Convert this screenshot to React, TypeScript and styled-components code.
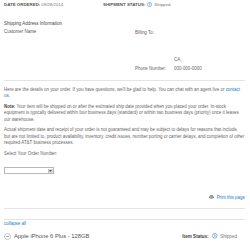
import React from "react";
import styled, { createGlobalStyle } from "styled-components";

const GlobalStyle = createGlobalStyle`
  html, body { margin: 0; padding: 0; background: #ffffff; }
  body { font-family: "Liberation Sans", Arial, sans-serif; color: #666666; }
  * { box-sizing: border-box; }
`;

const Page = styled.div`
  width: 250px;
  padding: 0.5px 5px 0 4px;
  font-size: 4.45px;
`;

const HeaderRow = styled.div`
  display: grid;
  grid-template-columns: 99px auto;
  line-height: 7px;
  font-size: 4.4px;
`;

const HeaderItem = styled.div`
  display: flex;
  align-items: center;
  gap: 1px;
  white-space: nowrap;
`;

const Label = styled.span`
  font-weight: bold;
  text-transform: uppercase;
  color: #555555;
`;

const Value = styled.span`
  color: #777777;
`;

const StatusIcon = styled.svg<{ $size: number }>`
  width: ${(p) => p.$size}px;
  height: ${(p) => p.$size}px;
  flex: none;
  margin: 0 1px;
`;

const AddressGrid = styled.div`
  display: grid;
  grid-template-columns: 131px 1fr;
  margin-top: 12.5px;
`;

const LeftCol = styled.div`
  line-height: 8px;
`;

const AddrTitle = styled.div`
  color: #444444;
`;

const AddrText = styled.div`
  color: #555555;
`;

const BillingGrid = styled.div`
  display: grid;
  grid-template-columns: 39px auto;
  grid-auto-rows: 9px;
  align-items: center;
  padding-top: 7.5px;
  color: #666666;
`;

const Divider = styled.div<{ $mt: number }>`
  border-top: 1px solid #e4e4e4;
  margin-top: ${(p) => p.$mt}px;
`;

const Para = styled.p<{ $mt: number }>`
  margin: ${(p) => p.$mt}px 0 0 0;
  line-height: 6.5px;
  color: #666666;
`;

const Strong = styled.b`
  color: #444444;
`;

const Link = styled.a`
  color: #1a7bc4;
  text-decoration: none;
`;

const SelectBox = styled.div`
  margin-top: 10px;
  width: 50px;
  height: 7px;
  border: 1px solid #b8b8b8;
  background: #ffffff;
  display: flex;
  justify-content: flex-end;
  padding: 0.5px;
`;

const SelectButton = styled.div`
  width: 5px;
  height: 100%;
  background: #dcdcdc;
  border-left: 1px solid #c4c4c4;
  display: flex;
  align-items: center;
  justify-content: center;
`;

const PrintRow = styled.div`
  margin-top: 19.5px;
  display: flex;
  justify-content: flex-end;
  align-items: center;
  gap: 3px;
  line-height: 7px;
`;

const CollapseRow = styled.div`
  margin-top: 1px;
  line-height: 6px;
`;

const ItemRow = styled.div`
  margin-top: 4.5px;
  display: flex;
  align-items: center;
  line-height: 9px;
  white-space: nowrap;
`;

const ItemName = styled.span`
  font-size: 5.8px;
  color: #555555;
  margin-left: 3px;
  flex: 1;
`;

const ItemStatus = styled.div`
  display: flex;
  align-items: center;
  gap: 1.5px;
  font-size: 4.6px;
  margin-right: 8px;
`;

const ItemLabel = styled.span`
  font-weight: bold;
  color: #444444;
  margin-right: 1px;
`;

const Info = ({ size }: { size: number }) => (
  <StatusIcon $size={size} viewBox="0 0 10 10">
    <circle cx="5" cy="5" r="4.2" fill="#ffffff" stroke="#3d8fd6" strokeWidth="1.2" />
    <path d="M4.2 3.2 L5.4 2.8 L5.4 7.2" fill="none" stroke="#3d8fd6" strokeWidth="1.1" />
  </StatusIcon>
);

const Printer = () => (
  <svg width="5" height="4" viewBox="0 0 10 8">
    <rect x="2.5" y="0" width="5" height="2.5" fill="#999" />
    <rect x="0" y="2.5" width="10" height="4" rx="1" fill="#888" />
    <rect x="2.5" y="5" width="5" height="3" fill="#bbb" />
  </svg>
);

const CollapseIcon = () => (
  <svg width="7" height="7" viewBox="0 0 14 14">
    <circle cx="7" cy="7" r="6" fill="#ffffff" stroke="#aaaaaa" strokeWidth="1.3" />
    <path d="M4 7 H10" stroke="#888888" strokeWidth="1.4" />
  </svg>
);

export default function App() {
  return (
    <>
      <GlobalStyle />
      <Page>
        <HeaderRow>
          <HeaderItem>
            <Label>Date Ordered:</Label>
            <Value>09/28/2014</Value>
          </HeaderItem>
          <HeaderItem>
            <Label>Shipment Status:</Label>
            <Info size={5} />
            <Value>Shipped</Value>
          </HeaderItem>
        </HeaderRow>

        <AddressGrid>
          <LeftCol>
            <AddrTitle>Shipping Address Information</AddrTitle>
            <AddrText>Customer Name</AddrText>
          </LeftCol>
          <BillingGrid>
            <span>Billing To:</span>
            <span />
            <span />
            <span />
            <span />
            <span />
            <span />
            <span>CA,</span>
            <span>Phone Number:</span>
            <span>000-000-0000</span>
          </BillingGrid>
        </AddressGrid>

        <Divider $mt={7.5} />

        <Para $mt={5.5}>
          Here are the details on your order. If you have questions, we'll be glad to help. You can chat with an agent live or{" "}
          <Link href="#">contact us</Link>.
        </Para>
        <Para $mt={4}>
          <Strong>Note:</Strong> Your item will be shipped on or after the estimated ship date provided when you placed your order. In-stock
          equipment is typically delivered within four business days (standard) or within two business days (priority) once it leaves
          our warehouse.
        </Para>
        <Para $mt={4}>
          Actual shipment date and receipt of your order is not guaranteed and may be subject to delays for reasons that include, but
          are not limited to, product availability, inventory, credit issues, number porting or carrier delays, and completion of other
          required AT&amp;T business processes.
        </Para>
        <Para $mt={4}>Select Your Order Number:</Para>

        <SelectBox>
          <SelectButton>
            <svg width="3" height="2" viewBox="0 0 6 4">
              <path d="M0 0 H6 L3 4 Z" fill="#555" />
            </svg>
          </SelectButton>
        </SelectBox>

        <PrintRow>
          <Printer />
          <Link href="#">Print this page</Link>
        </PrintRow>

        <Divider $mt={7.5} />
        <Divider $mt={10} />

        <CollapseRow>
          <Link href="#">collapse all</Link>
        </CollapseRow>

        <ItemRow>
          <CollapseIcon />
          <ItemName>Apple iPhone 6 Plus - 128GB</ItemName>
          <ItemStatus>
            <ItemLabel>Item Status:</ItemLabel>
            <Info size={5.5} />
            <Value>Shipped</Value>
          </ItemStatus>
        </ItemRow>
      </Page>
    </>
  );
}
